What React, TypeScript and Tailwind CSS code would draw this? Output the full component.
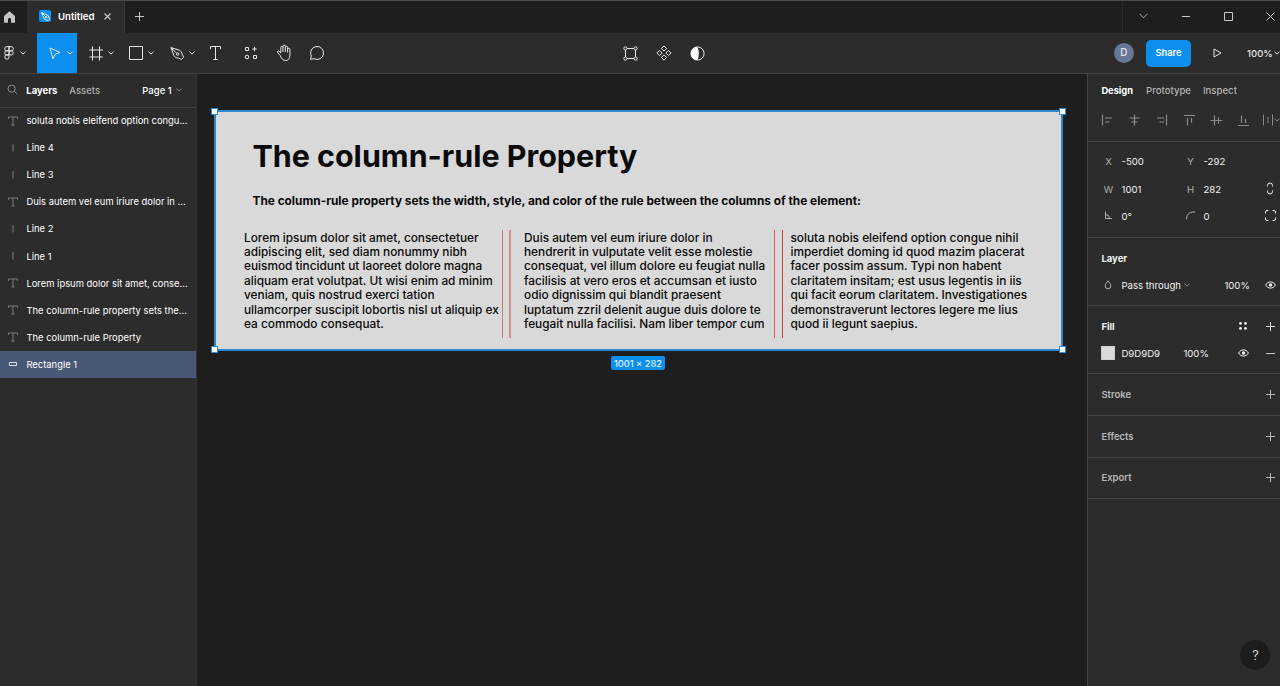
import React from "react";

type GlyphProps = {
  w: number;
  h: number;
  d?: string;
  sw?: number;
  className?: string;
  children?: React.ReactNode;
};

function Glyph({ w, h, d, sw = 1, className = "", children }: GlyphProps) {
  return (
    <svg
      width={w}
      height={h}
      viewBox={`0 0 ${w} ${h}`}
      fill="none"
      stroke="currentColor"
      strokeWidth={sw}
      className={`block shrink-0 ${className}`}
    >
      {d && <path d={d} />}
      {children}
    </svg>
  );
}

const Chevron = ({ className = "" }: { className?: string }) => (
  <Glyph w={6} h={4} d="M.5 .7 3 3.1 5.5 .7" className={className} />
);

const Plus = ({ className = "" }: { className?: string }) => (
  <Glyph w={9} h={9} d="M4.5 0V9M0 4.5H9" className={className} />
);

const Eye = () => (
  <Glyph w={11} h={8} d="M.6 4C2.8 -.1 8.2 -.1 10.4 4 8.2 8.1 2.8 8.1 .6 4Z">
    <circle cx="5.5" cy="4" r="1.7" fill="currentColor" stroke="none" />
  </Glyph>
);

const PenPath = () => (
  <>
    <path d="M1 1 5 2.6 10.4 5.2C11.6 6.6 11.6 8.4 12.2 10.6L10.6 12.2C8.4 11.6 6.6 11.6 5.2 10.4L2.6 5Z" />
    <path d="M1 1 6.4 6.4" />
    <circle cx="7.4" cy="7.4" r="1.2" />
  </>
);

function TabBar() {
  return (
    <div className="flex h-[33px] shrink-0 border-t border-[#4a4d4d] bg-[#1e1e1e] text-[#c8c8c8]">
      <div className="flex w-[27px] items-center pb-px pl-[4px]">
        <Glyph w={11} h={12} className="text-[#c4c4c4]">
          <path
            d="M5.5 .3 11 5V11.8H7V8.3Q7 7 5.5 7T4 8.3V11.8H0V5Z"
            fill="currentColor"
            stroke="none"
          />
        </Glyph>
      </div>
      <div className="flex w-[98px] items-center border-r border-[#3a3a3a] bg-[#2c2c2c] pb-[2px] pl-[12px]">
        <div className="flex h-[12px] w-[12px] items-center justify-center rounded-[2px] bg-[#0d8ff0] text-white">
          <svg width="9" height="9" viewBox="0 0 13 13" fill="none" stroke="currentColor" strokeWidth="1.3">
            <PenPath />
          </svg>
        </div>
        <span className="ml-[7px] w-[46px] pt-[2px] text-[9.6px] font-semibold text-white">Untitled</span>
        <Glyph w={7} h={7} d="M.5 .5 6.5 6.5M6.5 .5 .5 6.5" sw={1.2} />
      </div>
      <div className="flex flex-1 items-center pb-[2px] pl-[10px]">
        <Plus />
      </div>
      <div className="flex w-[158px] items-center border-l border-[#2c2c2c] pb-[2px] pl-[16px]">
        <Glyph w={9} h={6} d="M.5 .7 4.5 4.8 8.5 .7" className="text-[#a8a8a8]" />
        <Glyph w={8} h={9} d="M0 4.5H8" className="ml-[34px]" />
        <Glyph w={9} h={9} d="M.5 .5H8.5V8.5H.5Z" className="ml-[34px]" />
        <Glyph w={9} h={9} d="M.5 .5 8.5 8.5M8.5 .5 .5 8.5" className="ml-[33px]" />
      </div>
    </div>
  );
}

function Toolbar() {
  return (
    <div className="flex h-[41px] shrink-0 items-center border-b border-[#454545] bg-[#2c2c2c] text-[#e6e6e6]">
      <div className="flex w-[37px] items-center gap-[6px] pl-[4px]">
        <Glyph w={10} h={14} sw={1}>
          <path d="M5 .6H2.8A2.1 2.1 0 0 0 2.8 4.8H5ZM5 .6H7.2A2.1 2.1 0 0 1 7.2 4.8H5ZM5 4.8H2.8A2.1 2.1 0 0 0 2.8 9H5ZM5 9H2.8A2.1 2.1 0 1 0 5 11.1Z" />
          <circle cx="7.1" cy="6.9" r="2.1" />
        </Glyph>
        <Chevron />
      </div>
      <div className="flex h-[40px] w-[40px] items-center self-start bg-[#0d8ff0] pl-[12px]">
        <Glyph w={12} h={13} d="M1 1 11 5.4 6.4 7.1 3.9 11.7Z" />
        <Chevron className="ml-[6px]" />
      </div>
      <div className="flex w-[44px] items-center pl-[12px]">
        <Glyph w={15} h={15} d="M3.5 .5V14.5M10.5 .5V14.5M.5 4H14M.5 11H14" />
        <Chevron className="ml-[4px]" />
      </div>
      <div className="flex w-[41px] items-center pl-[7px]">
        <Glyph w={15} h={14} d="M1.5 .5H14.5V13.5H1.5Z" />
        <Chevron className="ml-[5px]" />
      </div>
      <div className="flex w-[48px] items-center pl-[8px]">
        <Glyph w={14} h={14}>
          <path d="M.8 2 3 4.2M1 1.6 9.4 4.2C10.6 4.6 12 6.4 12.4 8.8L13.6 11.4 11.4 13.4 8.8 12.2C6 12 4.2 10.8 3.8 9.4Z M1.2 1.8 6.8 7.3" />
          <circle cx="7.7" cy="8.1" r="1.2" />
        </Glyph>
        <Chevron className="ml-[5px]" />
      </div>
      <Glyph w={13} h={14} d="M1.5 3.2V.5H11.5V3.2M6.5 .8V13.5M4.3 13.5H8.7" className="ml-[-1px]" />
      <Glyph w={14} h={14} className="ml-[22px]">
        <path d="M1.5 1.5H4.5V4.5H1.5ZM9.5 9.5H12.5V12.5H9.5ZM10.5 .8V5.2M8.3 3H12.7" />
        <circle cx="3" cy="11" r="1.8" />
      </Glyph>
      <Glyph
        w={17}
        h={18}
        className="ml-[18px]"
        d="M4.3 11.5 1.8 8.9C.8 7.8 2 6.5 3.1 7.3L4.8 8.9V3.4C4.8 1.9 7 1.9 7 3.4V8M7 3.4V2.2C7 .7 9.3 .7 9.3 2.2V8M9.3 3.2C9.3 1.8 11.6 1.8 11.6 3.2V8.5M11.6 5.2C11.6 3.8 13.9 3.8 13.9 5.2V10.8C13.9 19 5.8 17.8 4.3 11.5"
      />
      <Glyph w={16} h={16} d="M1.5 14.4 2.3 11A6.5 6.5 0 1 1 5 13.7Z" className="ml-[16px]" />
      <div className="flex flex-1 items-center pl-[298px]">
        <Glyph w={15} h={15}>
          <path d="M4 2.5H11M4 12.5H11M2.5 4V11M12.5 4V11" />
          <circle cx="2.4" cy="2.4" r="1.6" />
          <circle cx="12.6" cy="2.4" r="1.6" />
          <circle cx="2.4" cy="12.6" r="1.6" />
          <circle cx="12.6" cy="12.6" r="1.6" />
        </Glyph>
        <Glyph
          w={16}
          h={16}
          className="ml-[18px]"
          d="M8 .9 10.6 3.5 8 6.1 5.4 3.5ZM3.5 5.4 6.1 8 3.5 10.6 .9 8ZM12.5 5.4 15.1 8 12.5 10.6 9.9 8ZM8 9.9 10.6 12.5 8 15.1 5.4 12.5Z"
        />
        <Glyph w={15} h={15} className="ml-[18px]">
          <circle cx="7.5" cy="7.5" r="6.6" />
          <path d="M7.5 .9A6.6 6.6 0 0 0 7.5 14.1C9.3 10 9.3 5 7.5 .9Z" fill="white" stroke="none" />
        </Glyph>
      </div>
      <div className="flex w-[166px] items-center text-[9.3px] font-medium">
        <div className="flex h-[20px] w-[20px] items-center justify-center rounded-full bg-[#667799] text-[9.8px]">D</div>
        <div className="ml-[12px] flex h-[27px] w-[46px] items-center justify-center rounded-[5px] bg-[#0d8ff0] pl-px text-[9.3px] font-semibold text-white">
          Share
        </div>
        <Glyph w={9} h={10} d="M1 1 8 5 1 9Z" className="ml-[22px]" />
        <span className="ml-[25.5px] w-[27.5px] pt-px text-[9.5px]">100%</span>
        <Chevron />
      </div>
    </div>
  );
}

type Layer = { kind: "text" | "line" | "rect"; name: string };

const layers: Layer[] = [
  { kind: "text", name: "soluta nobis eleifend option congu..." },
  { kind: "line", name: "Line 4" },
  { kind: "line", name: "Line 3" },
  { kind: "text", name: "Duis autem vel eum iriure dolor in ..." },
  { kind: "line", name: "Line 2" },
  { kind: "line", name: "Line 1" },
  { kind: "text", name: "Lorem ipsum dolor sit amet, conse..." },
  { kind: "text", name: "The column-rule property sets the..." },
  { kind: "text", name: "The column-rule Property" },
  { kind: "rect", name: "Rectangle 1" },
];

function LayerIcon({ kind }: { kind: Layer["kind"] }) {
  if (kind === "text")
    return <Glyph w={10} h={10} d="M.5 2.8V1H9.5V2.8M5 1V9M3.5 9H6.5" className="text-[#7c7c7c]" />;
  if (kind === "line") return <Glyph w={10} h={10} d="M5 1.2V8.5" className="text-[#7c7c7c]" />;
  return <Glyph w={10} h={10} d="M1.5 3.5H8.5V6.5H1.5Z" className="text-[#dfe4ee]" />;
}

function LayersPanel() {
  return (
    <div className="w-[197px] shrink-0 border-r border-[#333333] bg-[#2c2c2c] text-[9.42px] text-white">
      <div className="flex h-[34px] items-center border-b border-[#444444] pb-[2px] pl-[7px] [&>span]:pt-[1.5px]">
        <Glyph w={11} h={11} className="text-[#8c8c8c]">
          <circle cx="4.6" cy="4.6" r="3.6" />
          <path d="M7.2 7.2 10.4 10.4" />
        </Glyph>
        <span className="ml-[8.3px] w-[43px] text-[9.5px] font-bold">Layers</span>
        <span className="w-[73px] text-[9.5px] font-medium text-[#b3b3b3]">Assets</span>
        <span className="w-[33.7px] text-[9.5px] font-medium">Page 1</span>
        <Chevron className="text-[#8c8c8c]" />
      </div>
      <div className="mt-[-0.8px]">
        {layers.map((l) => (
          <div
            key={l.name}
            className={`flex h-[27.1px] items-center gap-[8.4px] pb-[0.3px] pl-[8px] whitespace-nowrap ${
              l.kind === "rect" ? "bg-[#4a5878]" : ""
            }`}
          >
            <LayerIcon kind={l.kind} />
            <span className="pt-[0.3px]">{l.name}</span>
          </div>
        ))}
      </div>
    </div>
  );
}

const columns = [
  [
    "Lorem ipsum dolor sit amet, consectetuer",
    "adipiscing elit, sed diam nonummy nibh",
    "euismod tincidunt ut laoreet dolore magna",
    "aliquam erat volutpat. Ut wisi enim ad minim",
    "veniam, quis nostrud exerci tation",
    "ullamcorper suscipit lobortis nisl ut aliquip ex",
    "ea commodo consequat.",
  ],
  [
    "Duis autem vel eum iriure dolor in",
    "hendrerit in vulputate velit esse molestie",
    "consequat, vel illum dolore eu feugiat nulla",
    "facilisis at vero eros et accumsan et iusto",
    "odio dignissim qui blandit praesent",
    "luptatum zzril delenit augue duis dolore te",
    "feugait nulla facilisi. Nam liber tempor cum",
  ],
  [
    "soluta nobis eleifend option congue nihil",
    "imperdiet doming id quod mazim placerat",
    "facer possim assum. Typi non habent",
    "claritatem insitam; est usus legentis in iis",
    "qui facit eorum claritatem. Investigationes",
    "demonstraverunt lectores legere me lius",
    "quod ii legunt saepius.",
  ],
];

const columnPlace = ["left-[29px]", "left-[309px]", "left-[575.5px]"];
const rulePlace = [
  "left-[287px] w-px bg-[#c97b7e]",
  "left-[294px] w-[2px] bg-[#cc9092]",
  "left-[559px] w-px bg-[#dc5a5c]",
  "left-[567px] w-px bg-[#c93c40]",
];
const handlePlace = [
  "left-[-4px] top-[-3px]",
  "right-[-4px] top-[-3px]",
  "left-[-4px] bottom-[-2px]",
  "right-[-4px] bottom-[-2px]",
];

function Canvas() {
  return (
    <div className="relative min-w-0 flex-1 overflow-hidden bg-[#1e1e1e]">
      <div className="absolute left-[18px] top-[37px] h-[240px] w-[847px] bg-[#d9d9d9] text-[#0a0a0a]">
        <div className="absolute top-[-1px] right-[-1px] bottom-[0px] left-[-1px] border-2 border-[#2b88d0]" />
        <h1 className="absolute left-[37.4px] top-[26px] whitespace-nowrap text-[30.46px] leading-[37px] font-bold">
          The column-rule Property
        </h1>
        <p className="absolute left-[37.5px] top-[83px] whitespace-nowrap text-[11.85px] leading-[14.4px] font-bold">
          The column-rule property sets the width, style, and color of the rule between the columns of the element:
        </p>
        {columns.map((lines, i) => (
          <div
            key={i}
            className={`absolute top-[119.7px] whitespace-nowrap text-[11.84px] leading-[14.38px] font-medium ${columnPlace[i]}`}
          >
            {lines.map((t) => (
              <div key={t}>{t}</div>
            ))}
          </div>
        ))}
        {rulePlace.map((c) => (
          <div key={c} className={`absolute top-[119px] h-[108px] ${c}`} />
        ))}
        {handlePlace.map((c) => (
          <div key={c} className={`absolute h-[7px] w-[7px] border border-[#2a8fe0] bg-white ${c}`} />
        ))}
        <div className="absolute left-[396px] top-[245px] flex h-[14px] w-[54px] items-center justify-center rounded-[2px] bg-[#0d8ff0] pt-px text-[9.3px] font-medium text-[#dff0ff]">
          1001 × 282
        </div>
      </div>
    </div>
  );
}

const alignIcons = [
  "M1.5 .5V11.5M4 4H11M4 8H8.5",
  "M6.5 .5V11.5M1.5 4H11.5M3.5 8H9.5",
  "M11.5 .5V11.5M2 4H9M4.5 8H9",
  "M1 1.5H12M4.5 4V11.5M8.5 4V8.5",
  "M.5 6.5H12.5M4.5 1.5V11.5M8.5 3.5V9.5",
  "M1 11.5H12M4.5 1.5V9M8.5 5V9",
];

function Field({ icon, value }: { icon: React.ReactNode; value: string }) {
  return (
    <div className="flex w-[82px] items-center">
      <div className="flex w-[12px] justify-center text-[#b0b0b0]">
        {typeof icon === "string" ? <span>{icon}</span> : icon}
      </div>
      <span className="ml-[7px]">{value}</span>
    </div>
  );
}

function Collapsed({ name, className }: { name: string; className: string }) {
  return (
    <div className={`flex items-center border-b border-[#444444] pb-px pl-[13.4px] text-[#b8b8b8] ${className}`}>
      <span className="w-[164.6px] text-[9.5px] font-semibold">{name}</span>
      <Plus />
    </div>
  );
}

function DesignPanel() {
  return (
    <div className="relative w-[193px] shrink-0 overflow-hidden border-l border-[#444444] bg-[#2c2c2c] text-[9.6px] text-[#f2f2f2] [&_span]:pt-[1.4px]">
      <div className="flex h-[32px] items-center pl-[13.4px] text-[9.6px] font-medium text-[#b3b3b3]">
        <span className="w-[44.6px] text-[9.3px] font-bold text-white">Design</span>
        <span className="w-[57px]">Prototype</span>
        <span>Inspect</span>
      </div>
      <div className="flex h-[36px] items-center gap-[14.2px] border-b border-[#444444] pb-[7px] pl-[13px] text-[#8c8c8c]">
        {alignIcons.map((d) => (
          <Glyph key={d} w={13} h={13} d={d} sw={1.2} />
        ))}
        <div className="ml-[-1px] flex items-center gap-px">
          <Glyph w={10} h={12} d="M.5 .5V11.5M9.5 .5V11.5M5 3V9" />
          <Chevron />
        </div>
      </div>
      <div className="flex h-[96px] flex-col border-b border-[#444444] pt-[6px] pl-[14.5px]">
        <div className="flex h-[27.2px] items-center">
          <Field icon="X" value="-500" />
          <Field icon="Y" value="-292" />
        </div>
        <div className="flex h-[27.2px] items-center">
          <Field icon="W" value="1001" />
          <Field icon="H" value="282" />
          <Glyph w={8} h={13} d="M1.5 4.5V3.5A2.5 2.5 0 0 1 6.5 3.5V4.5M1.5 8.5V9.5A2.5 2.5 0 0 0 6.5 9.5V8.5" className="ml-[-0.5px]" />
        </div>
        <div className="flex h-[27.2px] items-center">
          <Field icon={<Glyph w={9} h={9} d="M1.5 .5V7.5H8M1.5 3.5A4 4 0 0 1 5.5 7.5" />} value="0°" />
          <Field icon={<Glyph w={9} h={9} d="M.7 8.5V7A6 6 0 0 1 6.7 1H9" />} value="0" />
          <Glyph w={11} h={11} d="M.5 3.5V2Q.5 .5 2 .5H3.5M7.5 .5H9Q10.5 .5 10.5 2V3.5M10.5 7.5V9Q10.5 10.5 9 10.5H7.5M3.5 10.5H2Q.5 10.5 .5 9V7.5" className="ml-[-1.5px]" />
        </div>
      </div>
      <div className="h-[68px] border-b border-[#444444] pt-[6.5px] pl-[13.4px]">
        <div className="flex h-[27px] items-center text-[9.5px] font-bold">
          <span>Layer</span>
        </div>
        <div className="flex h-[27px] items-center">
          <Glyph w={14} h={10} d="M7 .8C5.5 2.8 4.2 4.2 4.2 6A2.8 2.8 0 0 0 9.8 6C9.8 4.2 8.5 2.8 7 .8Z" className="text-[#b0b0b0]" />
          <span className="ml-[6px] w-[63px] whitespace-nowrap">Pass through</span>
          <Chevron className="text-[#8c8c8c]" />
          <span className="ml-[34px] w-[40.6px]">100%</span>
          <Eye />
        </div>
      </div>
      <div className="h-[68px] border-b border-[#444444] pt-[6.5px] pl-[13.4px]">
        <div className="flex h-[27px] items-center">
          <span className="w-[138px] text-[9.5px] font-bold">Fill</span>
          <Glyph w={8} h={8} className="mr-[18.6px]">
            <g fill="currentColor" stroke="none">
              <circle cx="1.5" cy="1.4" r="1.35" />
              <circle cx="6.5" cy="1.4" r="1.35" />
              <circle cx="1.5" cy="6.4" r="1.35" />
              <circle cx="6.5" cy="6.4" r="1.35" />
            </g>
          </Glyph>
          <Plus className="text-[#dcdcdc]" />
        </div>
        <div className="flex h-[27px] items-center">
          <div className="h-[14px] w-[14px] border border-[#cfcfcf] bg-[#d9d9d9]" />
          <span className="ml-[6px] w-[62px]">D9D9D9</span>
          <span className="w-[54.6px]">100%</span>
          <Eye />
          <Glyph w={9} h={9} d="M0 4.5H9" className="ml-[17px] text-[#c8c8c8]" />
        </div>
      </div>
      <Collapsed name="Stroke" className="h-[42px]" />
      <Collapsed name="Effects" className="h-[42px]" />
      <Collapsed name="Export" className="h-[41px]" />
      <div className="absolute top-[566px] left-[152px] flex h-[30px] w-[30px] items-center justify-center rounded-full bg-[#1c1c1c] pl-px text-[13px] font-light text-white">
        ?
      </div>
    </div>
  );
}

export default function App() {
  return (
    <div className="flex h-[686px] w-[1280px] flex-col overflow-hidden bg-[#1e1e1e] font-['Inter',sans-serif] leading-none antialiased">
      <TabBar />
      <Toolbar />
      <div className="flex min-h-0 flex-1">
        <LayersPanel />
        <Canvas />
        <DesignPanel />
      </div>
    </div>
  );
}
